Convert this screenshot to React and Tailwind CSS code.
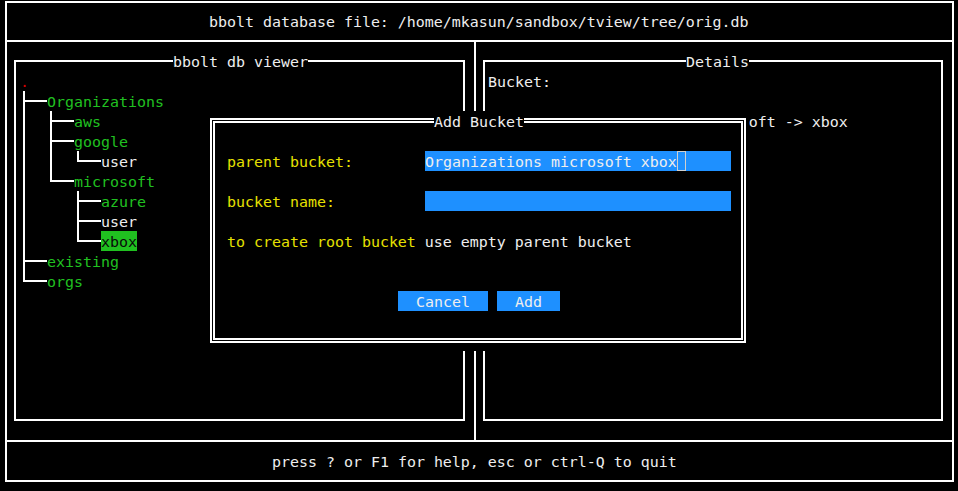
import React from "react";

const GREEN = "text-[#20c020]";

// one 9px terminal cell drawing a tree glyph: T = ├, L = └, I = │, - = ─
const Cell = ({ t }) => {
  if (t === "I") {
    return (
      <div className="w-[9px] h-[20px] shrink-0">
        <div className="ml-[3px] w-[2px] h-[20px] bg-white" />
      </div>
    );
  }
  if (t === "T" || t === "L") {
    return (
      <div className="w-[9px] h-[20px] shrink-0 flex">
        <div className={`ml-[3px] w-[2px] bg-white ${t === "T" ? "h-[20px]" : "h-[11px]"}`} />
        <div className="mt-[9px] h-[2px] flex-1 bg-white" />
      </div>
    );
  }
  if (t === "-") {
    return (
      <div className="w-[9px] h-[20px] shrink-0">
        <div className="mt-[9px] h-[2px] w-[9px] bg-white" />
      </div>
    );
  }
  return <div className="w-[9px] h-[20px] shrink-0" />;
};

const treeRows = [
  { p: "T--", label: "Organizations", color: GREEN },
  { p: "I  T--", label: "aws", color: GREEN },
  { p: "I  T--", label: "google", color: GREEN },
  { p: "I  I  L--", label: "user", color: "text-[#eeeeee]" },
  { p: "I  L--", label: "microsoft", color: GREEN },
  { p: "I     T--", label: "azure", color: GREEN },
  { p: "I     T--", label: "user", color: "text-[#eeeeee]" },
  { p: "I     L--", label: "xbox", color: "text-[#0a0a0a] bg-[#20c020]" },
  { p: "T--", label: "existing", color: GREEN },
  { p: "L--", label: "orgs", color: GREEN },
];

export default function App() {
  return (
    <div className="relative w-[958px] h-[491px] overflow-hidden bg-black pl-[5px] pt-[1px] font-['DejaVu_Sans_Mono',monospace] text-[14.95px] leading-[22px] text-[#eeeeee] whitespace-pre">
      <div className="w-[949px] h-[481px] border-2 border-white flex flex-col">
        {/* header */}
        <div className="h-[39px] border-b-2 border-white pt-[8px] pl-[202px]">
          <div className="h-[20px]">bbolt database file: /home/mkasun/sandbox/tview/tree/orig.db</div>
        </div>

        {/* panels */}
        <div className="h-[398px] flex">
          <div className="w-[469px] border-r-2 border-white">
            <div className="relative ml-[7px] mt-[18px] w-[451px] h-[361px] border-2 border-white pl-[4px] pt-[9px]">
              <div className="absolute left-[157px] top-[-11px] h-[20px] bg-black">bbolt db viewer</div>
              <div className="h-[20px] flex">
                <div className="w-[9px] text-[#d00000]">.</div>
              </div>
              {treeRows.map((row, i) => (
                <div key={i} className="h-[20px] flex">
                  {row.p.split("").map((c, j) => (
                    <Cell key={j} t={c} />
                  ))}
                  <span className={row.color}>{row.label}</span>
                </div>
              ))}
            </div>
          </div>
          <div className="flex-1">
            <div className="relative ml-[7px] mt-[18px] w-[460px] h-[361px] border-2 border-white pl-[3px] pt-[9px]">
              <div className="absolute left-[201px] top-[-11px] h-[20px] bg-black">Details</div>
              <div className="h-[20px]">Bucket:</div>
              <div className="h-[20px]" />
              <div className="h-[20px]">Path: Organizations -&gt; microsoft -&gt; xbox</div>
            </div>
          </div>
        </div>

        {/* footer */}
        <div className="flex-1 border-t-2 border-white pt-[9px] pl-[265px]">
          <div className="h-[20px]">press ? or F1 for help, esc or ctrl-Q to quit</div>
        </div>
      </div>

      {/* modal dialog */}
      <div className="absolute left-[209px] top-[111px] w-[540px] h-[240px] bg-black pl-[1px] pt-[7px]">
        <div className="w-[536px] h-[225px] border-2 border-white p-[1px] flex">
          <div className="flex-1 border-2 border-white pt-[28px] flex flex-col gap-5">
            <div className="flex pl-[12px] h-[20px]">
              <div className="w-[198px] text-[#e6e000]">parent bucket:</div>
              <div className="w-[306px] h-[20px] bg-[#1e90ff] flex">
                <span>Organizations microsoft xbox</span>
                <div className="w-[9px] h-[20px] border border-[#d0d0d0]" />
              </div>
            </div>
            <div className="flex pl-[12px] h-[20px]">
              <div className="w-[198px] text-[#e6e000]">bucket name:</div>
              <div className="w-[306px] h-[20px] bg-[#1e90ff]" />
            </div>
            <div className="pl-[12px] h-[20px]">
              <span className="text-[#e6e000]">to create root bucket</span>
              <span> use empty parent bucket</span>
            </div>
            <div className="mt-5 h-[20px] flex justify-center gap-[9px] pl-[2px]">
              <div className="w-[90px] h-[20px] bg-[#1e90ff] text-center">Cancel</div>
              <div className="w-[63px] h-[20px] bg-[#1e90ff] text-center">Add</div>
            </div>
          </div>
        </div>
        <div className="absolute left-[225px] top-0 h-[20px] bg-black">Add Bucket</div>
      </div>
    </div>
  );
}
